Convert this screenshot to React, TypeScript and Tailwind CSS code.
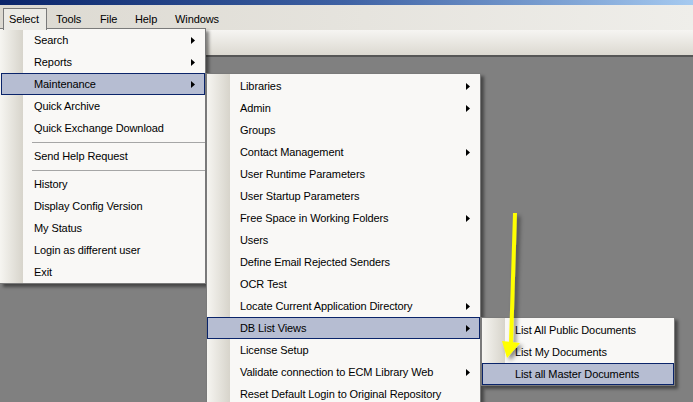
import clsx from "clsx"

type Item = { label: string; sub?: boolean; hi?: boolean } | "sep"

const selectItems: Item[] = [
  { label: "Search", sub: true },
  { label: "Reports", sub: true },
  { label: "Maintenance", sub: true, hi: true },
  { label: "Quick Archive" },
  { label: "Quick Exchange Download" },
  "sep",
  { label: "Send Help Request" },
  "sep",
  { label: "History" },
  { label: "Display Config Version" },
  { label: "My Status" },
  { label: "Login as different user" },
  { label: "Exit" },
]

const maintenanceItems: Item[] = [
  { label: "Libraries", sub: true },
  { label: "Admin", sub: true },
  { label: "Groups" },
  { label: "Contact Management", sub: true },
  { label: "User Runtime Parameters" },
  { label: "User Startup Parameters" },
  { label: "Free Space in Working Folders", sub: true },
  { label: "Users" },
  { label: "Define Email Rejected Senders" },
  { label: "OCR Test" },
  { label: "Locate Current Application Directory", sub: true },
  { label: "DB List Views", sub: true, hi: true },
  { label: "License Setup" },
  { label: "Validate connection to ECM Library Web", sub: true },
  { label: "Reset Default Login to Original Repository" },
]

const listItems: Item[] = [
  { label: "List All Public Documents" },
  { label: "List My Documents" },
  { label: "List all Master Documents", hi: true },
]

export default function App() {
  return (
    <div className="relative w-[693px] h-[402px] overflow-hidden bg-[#808080] font-['Liberation_Sans',Arial,sans-serif] text-[11px] tracking-[-0.1px] text-black">
      {/* title bar (mostly cut off) */}
      <div className="h-[5px] bg-gradient-to-r from-[#0a246a] via-[#3f62a4] to-[#a6caf0]" />

      {/* menu bar */}
      <div className="h-[25px] flex items-end pl-[3px] bg-gradient-to-r from-[#dcd9d1] to-[#efeeea]">
        <div className="relative z-20 w-[44px] h-[22px] pl-[5px] flex items-center border border-b-0 border-[#7a7a7a] bg-[#ecebe6]">
          Select
        </div>
        <div className="w-[44px] h-[21px] pl-[9px] flex items-center">Tools</div>
        <div className="w-[35px] h-[21px] pl-[9px] flex items-center">File</div>
        <div className="w-[40px] h-[21px] pl-[9px] flex items-center">Help</div>
        <div className="h-[21px] pl-[9px] flex items-center">Windows</div>
      </div>

      {/* toolbar */}
      <div className="h-[27px] bg-gradient-to-b from-[#f6f5f2] to-[#dcd9d1] border-b-2 border-[#565656]" />

      {/* dropdowns */}
      <Menu items={selectItems} className="left-0 top-[28px] w-[206px] border-l-0 pl-px z-10" />
      <Menu items={maintenanceItems} className="left-[206px] top-[73px] w-[275px] pt-px z-10" />
      <Menu items={listItems} className="left-[481px] top-[317px] w-[194px] pt-px z-10" />

      {/* yellow annotation arrow */}
      <svg className="absolute left-0 top-0 z-30 pointer-events-none" width="693" height="402">
        <defs>
          <filter id="sh" x="-50%" y="-20%" width="200%" height="140%">
            <feDropShadow dx="3" dy="3" stdDeviation="2" floodColor="#000" floodOpacity="0.45" />
          </filter>
        </defs>
        <g filter="url(#sh)">
          <line x1="515" y1="213" x2="511" y2="343" stroke="#ffff00" strokeWidth="4" />
          <polygon points="502,341 520,343 507,358" fill="#ffff00" />
        </g>
      </svg>
    </div>
  )
}

function Menu({ items, className }: { items: Item[]; className?: string }) {
  return (
    <div
      className={clsx(
        "absolute border border-[#7a7a7a] shadow-[3px_3px_3px_rgba(0,0,0,0.45)] bg-[linear-gradient(to_right,#f6f5f1,#d7d4cb_23px,#f9f8f6_23px)]",
        className
      )}
    >
      {items.map((it, i) =>
        it === "sep" ? (
          <div key={i} className="h-[6px] flex items-center">
            <div className="ml-[31px] h-px flex-1 bg-[#a6a6a6]" />
          </div>
        ) : (
          <div
            key={i}
            className={clsx(
              "h-[22px] flex items-center pl-[32px] pr-[9px] border whitespace-nowrap",
              it.hi ? "bg-[#b6bdd2] border-[#0a246a]" : "border-transparent"
            )}
          >
            <span>{it.label}</span>
            {it.sub && (
              <svg className="ml-auto" width="4" height="7" viewBox="0 0 4 7">
                <polygon points="0,0 4,3.5 0,7" fill="#000" />
              </svg>
            )}
          </div>
        )
      )}
    </div>
  )
}
